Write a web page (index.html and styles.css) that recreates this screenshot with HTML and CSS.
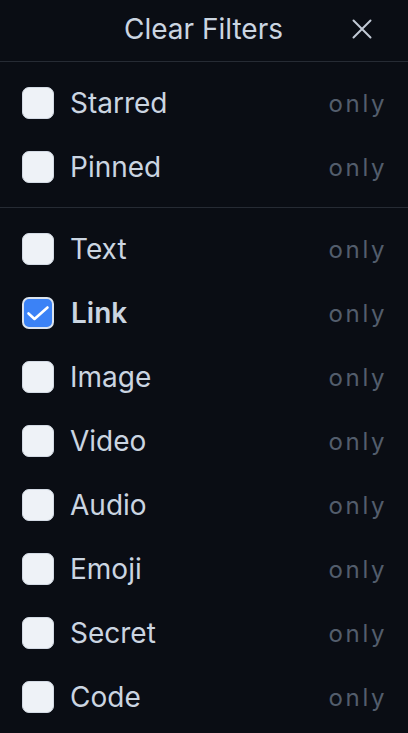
FILE: index.html
```html
<!DOCTYPE html>
<html>
<head>
<meta charset="utf-8">
<title>Filters</title>
<link rel="stylesheet" href="styles.css">
</head>
<body>
<div class="panel">
	<div class="header">
		<span class="title">Clear Filters</span>
		<button class="close" aria-label="Close">
			<svg width="24" height="24" viewBox="0 0 24 24" fill="none" stroke="currentColor" stroke-width="2" stroke-linecap="round"><path d="M3.5 3.5L20.5 20.5M20.5 3.5L3.5 20.5"/></svg>
		</button>
	</div>
	<div class="section">
		<label class="row"><span class="box"></span><span class="name">Starred</span><span class="only">only</span></label>
		<label class="row"><span class="box"></span><span class="name">Pinned</span><span class="only">only</span></label>
	</div>
	<div class="section">
		<label class="row"><span class="box"></span><span class="name">Text</span><span class="only">only</span></label>
		<label class="row checked"><span class="box"><svg width="28" height="28" viewBox="0 0 28 28" fill="none" stroke="#fff" stroke-width="2.6" stroke-linecap="round" stroke-linejoin="round"><path d="M4.5 14.5L10.5 20L23.5 8.5"/></svg></span><span class="name">Link</span><span class="only">only</span></label>
		<label class="row"><span class="box"></span><span class="name">Image</span><span class="only">only</span></label>
		<label class="row"><span class="box"></span><span class="name">Video</span><span class="only">only</span></label>
		<label class="row"><span class="box"></span><span class="name">Audio</span><span class="only">only</span></label>
		<label class="row"><span class="box"></span><span class="name">Emoji</span><span class="only">only</span></label>
		<label class="row"><span class="box"></span><span class="name">Secret</span><span class="only">only</span></label>
		<label class="row"><span class="box"></span><span class="name">Code</span><span class="only">only</span></label>
	</div>
</div>
</body>
</html>
```

FILE: styles.css
```css
*{
	margin: 0;
	padding: 0;
	box-sizing: border-box;
}
body{
	background: #0a0d14;
	color: #cbd5e1;
	font-family: Inter, "Noto Sans", sans-serif;
}
.panel{
	width: 408px;
}
.header{
	height: 62px;
	border-bottom: 1px solid #262b34;
	display: flex;
	align-items: center;
	justify-content: center;
	position: relative;
}
.title{
	font-size: 28px;
	color: #cbd5e1;
	margin-left: -1px;
	margin-top: -3px;
}
.close{
	position: absolute;
	right: 34px;
	top: 17px;
	background: none;
	border: none;
	color: #c2cad6;
	width: 24px;
	height: 24px;
	cursor: pointer;
}
.section{
	padding: 9px 0 8px;
	border-bottom: 1px solid #262b34;
}
.section:last-child{
	border-bottom: none;
}
.row{
	height: 64px;
	display: flex;
	align-items: center;
	padding: 0 22px;
	cursor: pointer;
}
.box{
	width: 32px;
	height: 32px;
	border-radius: 7px;
	background: #eef2f7;
	border: 1px solid #d3dae4;
	display: flex;
	align-items: center;
	justify-content: center;
	flex-shrink: 0;
}
.checked .box{
	background: #3b82f6;
	border: 2px solid #dbe3ee;
}
.name{
	margin-left: 16px;
	font-size: 28px;
	flex: 1;
}
.checked .name{
	font-weight: 600;
	margin-left: 17px;
}
.only{
	font-size: 24px;
	letter-spacing: 2.6px;
	color: #535d6c;
	margin-right: -1px;
}
```
